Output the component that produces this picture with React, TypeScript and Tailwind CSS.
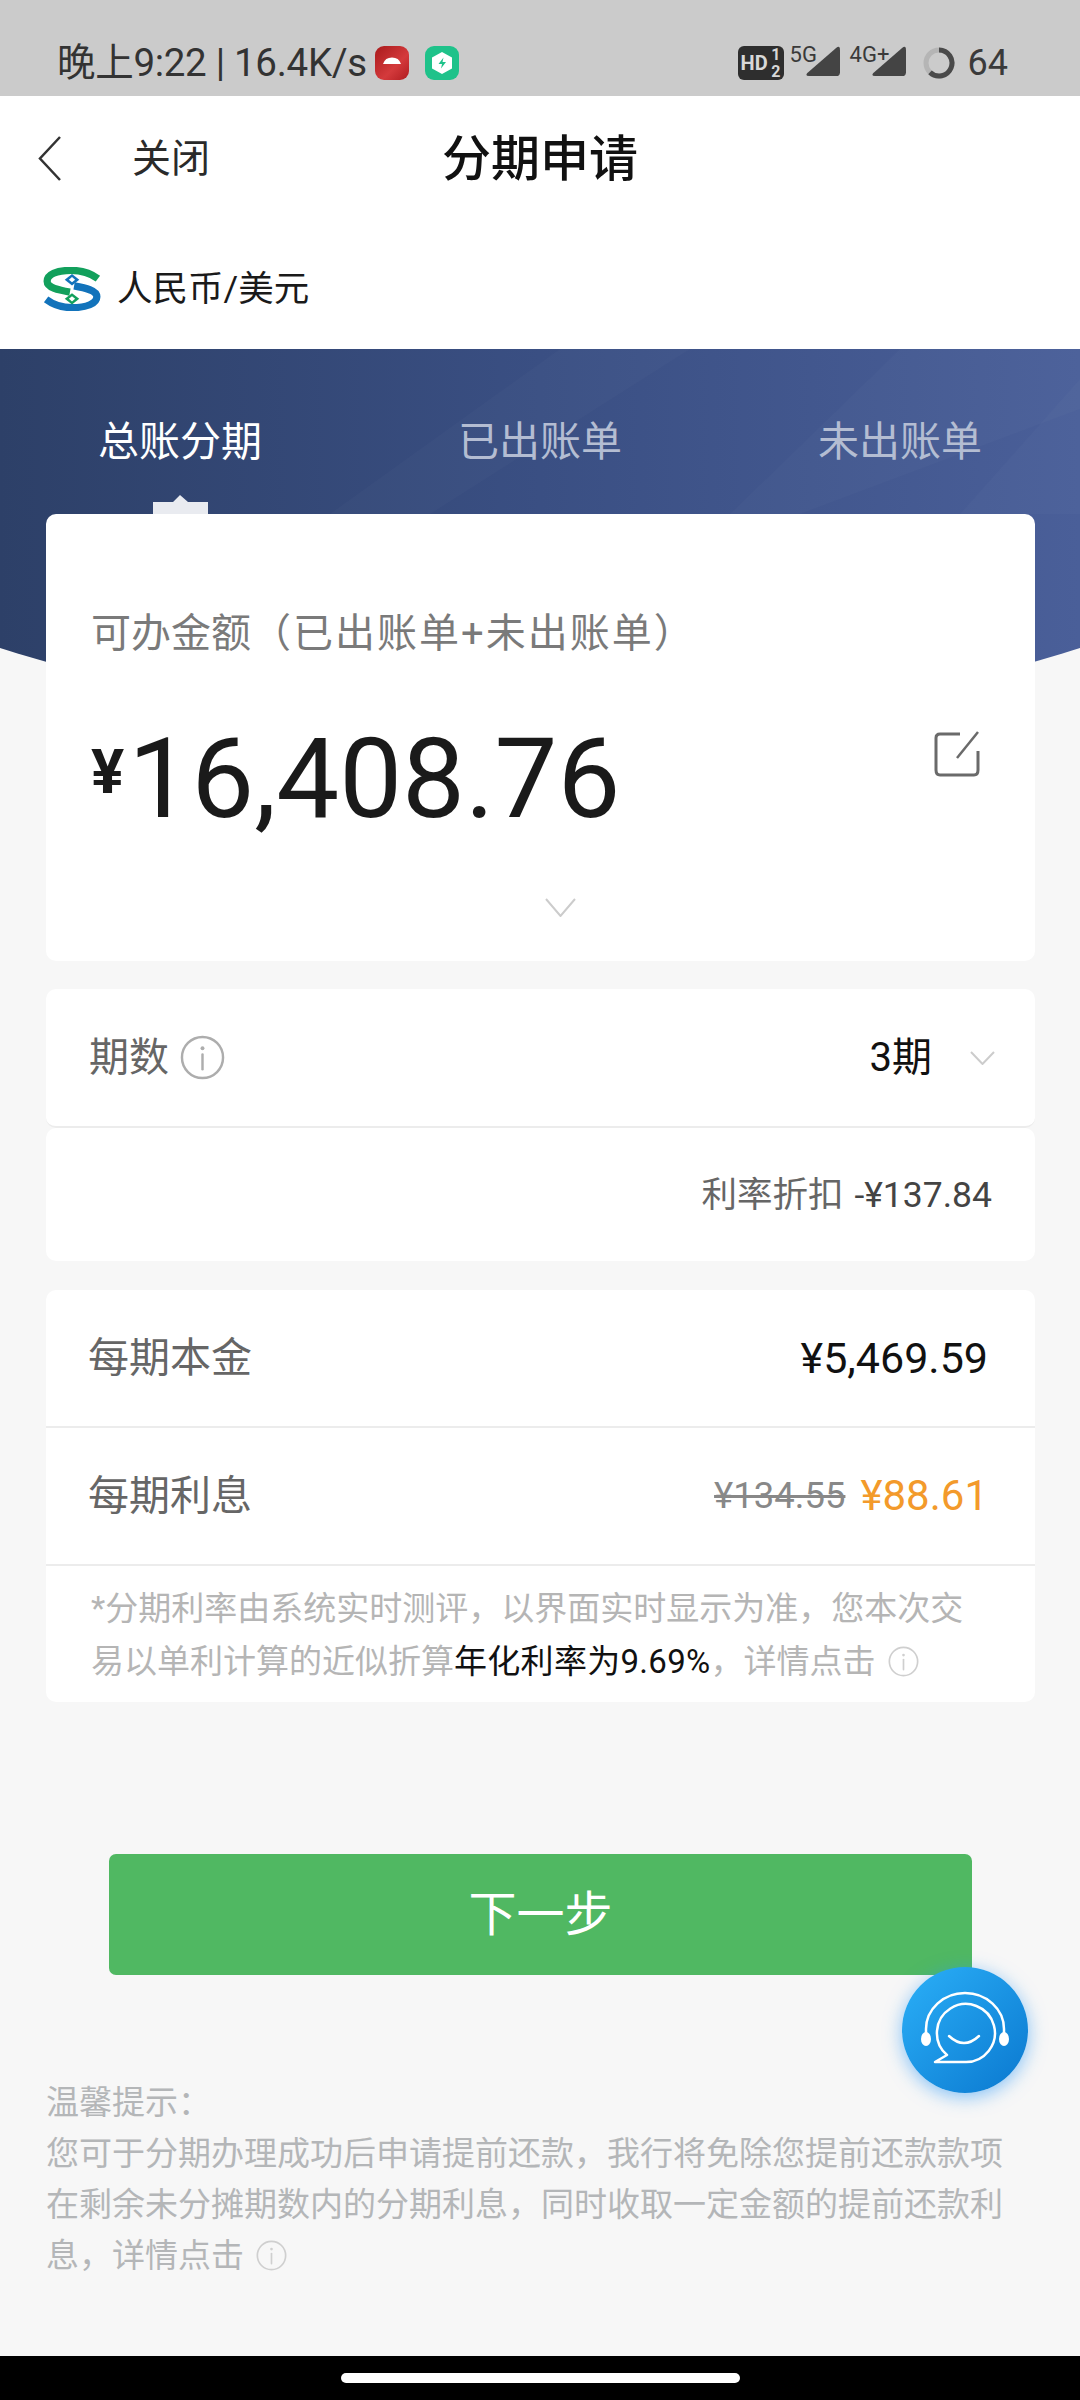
import React from 'react';

const SANS = 'font-[Roboto,"Noto_Sans_CJK_SC",sans-serif]';

function InfoIcon({ size, color }: { size: number; color: string }) {
  return (
    <svg width={size} height={size} viewBox="0 0 46 46" fill="none" className="inline-block shrink-0">
      <circle cx="23" cy="23" r="21" stroke={color} strokeWidth="2.5" />
      <circle cx="23" cy="13.5" r="2" fill={color} />
      <path d="M23 20v15" stroke={color} strokeWidth="2.5" strokeLinecap="round" />
    </svg>
  );
}

function Chevron({ w, h, color = '#cccccc' }: { w: number; h: number; color?: string }) {
  return (
    <svg width={w} height={h} viewBox={`0 0 ${w} ${h}`} fill="none" className="shrink-0">
      <path d={`M1 1L${w / 2} ${h - 1}L${w - 1} 1`} stroke={color} strokeWidth="2" />
    </svg>
  );
}

function Signal({ label, w }: { label: string; w: number }) {
  return (
    <div className="relative h-[34px]" style={{ width: w }}>
      <span className="absolute left-0 top-[-4px] text-[22px] leading-[26px] text-[#3a3a3a]">{label}</span>
      <svg width="35" height="31" viewBox="0 0 36 32" className="absolute right-0 top-0">
        <path d="M1 28L31 2Q35 -1 35 4V27Q35 31 31 31H3Q-1 31 1 28Z" fill="#444444" />
      </svg>
    </div>
  );
}

function StatusBar() {
  return (
    <div className="h-[96px] shrink-0 bg-[#cbcbcb] pl-[57px] pr-[72px] pt-[43px] flex justify-between items-start text-[#333333]">
      <div className="flex items-center h-[40px]">
        <span className="text-[38.5px] leading-[40px] tracking-[-0.3px] whitespace-nowrap">晚上9:22 | 16.4K/s</span>
        <svg width="34" height="34" viewBox="0 0 34 34" className="ml-[8px]">
          <defs>
            <linearGradient id="red" x1="0" y1="0" x2="1" y2="1">
              <stop offset="0" stopColor="#a91a1c" />
              <stop offset="0.6" stopColor="#d43a3c" />
              <stop offset="1" stopColor="#b01c20" />
            </linearGradient>
          </defs>
          <rect width="34" height="34" rx="9" fill="url(#red)" />
          <path d="M8 18a9.5 9.5 0 0 1 18 0Z" fill="#ffffff" />
        </svg>
        <svg width="34" height="34" viewBox="0 0 34 34" className="ml-[16px]">
          <rect width="34" height="34" rx="9" fill="#1fc28a" />
          <path d="M17 6l10 5.5v11L17 28 7 22.500v-11Z" fill="#ffffff" />
          <path d="M18.500 11.500L13.500 18h3.500l-1 4.500 5-6.500h-3.500Z" fill="#1fc28a" />
        </svg>
      </div>
      <div className="flex items-start">
        <div className="relative w-[46px] h-[34px] mt-[3px] rounded-[6px] bg-[#2e2e2e] text-[#d8d8d8] font-bold">
          <span className="absolute left-[3px] top-[7px] text-[20px] leading-[20px]">HD</span>
          <span className="absolute right-[3px] top-0 text-[16px] leading-[17px]">1</span>
          <span className="absolute right-[3px] bottom-0 text-[16px] leading-[17px]">2</span>
        </div>
        <div className="ml-[6px] mt-[3px]"><Signal label="5G" w={51} /></div>
        <div className="ml-[9px] mt-[3px]"><Signal label="4G+" w={57} /></div>
        <svg width="34" height="34" viewBox="0 0 34 34" fill="none" className="ml-[15px] mt-[3px]">
          <circle cx="17" cy="17" r="13" stroke="#b5b5b5" strokeWidth="5" />
          <path d="M17 4a13 13 0 1 1-9 22.400" stroke="#4a4a4a" strokeWidth="5" />
        </svg>
        <span className="ml-[12px] text-[36px] leading-[40px] text-[#3a3a3a]">64</span>
      </div>
    </div>
  );
}

function BankLogo() {
  return (
    <svg width="58" height="44" viewBox="0 0 56 42" fill="none" className="shrink-0">
      <path d="M53 11C45 5 36 3 27 3C13 3 4 7 4 13.500C4 20 15 22 26 24" stroke="#12a05c" strokeWidth="7" />
      <path d="M3 31C11 37 19 39 28 39C42 39 52 35 52 28.500C52 22 41 20 30 18" stroke="#1273bb" strokeWidth="7" />
      <path d="M28 6.500l7 5.500-7 5.500-7-5.500Z" fill="#1273bb" />
      <path d="M28 25l7 5.500-7 5.500-7-5.500Z" fill="#12a05c" />
      <path d="M28 9.500l3 2.500-3 2.500-3-2.500Z" fill="#ffffff" />
      <path d="M28 28l3 2.500-3 2.500-3-2.500Z" fill="#ffffff" />
    </svg>
  );
}

function SupportFab() {
  return (
    <div className="absolute left-[902px] top-[1967px] w-[126px] h-[126px] rounded-full bg-gradient-to-br from-[#2bb0f8] to-[#0a78cf] shadow-[0_4px_18px_rgba(40,150,245,0.55)]">
      <svg width="126" height="126" viewBox="0 0 126 126" fill="none">
        <path d="M24 66V62a39 36 0 0 1 78 0V66" stroke="#ffffff" strokeWidth="2.500" />
        <ellipse cx="24" cy="72" rx="5" ry="7" fill="#ffffff" />
        <ellipse cx="102" cy="72" rx="5" ry="7" fill="#ffffff" />
        <path d="M45 88A29 29 0 1 1 63 95H33L45 88Z" stroke="#ffffff" strokeWidth="2.500" strokeLinejoin="round" />
        <path d="M47 69Q62 83 77 69" stroke="#ffffff" strokeWidth="2.500" strokeLinecap="round" />
      </svg>
    </div>
  );
}

export default function App() {
  return (
    <div className={`relative w-[1080px] h-[2400px] flex flex-col overflow-hidden bg-[#f7f7f7] ${SANS}`}>
      <StatusBar />

      <div className="h-[124px] shrink-0 bg-white relative flex items-center">
        <svg width="24" height="45" viewBox="0 0 24 45" fill="none" className="ml-[38px]">
          <path d="M22 1L2 22.500L22 44" stroke="#333333" strokeWidth="2.500" />
        </svg>
        <span className="ml-[70px] mt-[2px] text-[39px] leading-[50px] text-[#2a2a2a]">关闭</span>
        <span className="absolute inset-x-0 top-[34px] text-center text-[49px] leading-[60px] font-medium text-[#111111]">分期申请</span>
      </div>

      <div className="h-[129px] shrink-0 bg-white pl-[43px] pt-[9px] flex items-center gap-[16px]">
        <BankLogo />
        <span className="text-[35.5px] leading-[48px] text-[#1a1a1a]">人民币/美元</span>
      </div>

      <div className="relative">
        {/* blue header behind the first card */}
        <div className="absolute left-0 top-0 w-full h-[382px] bg-gradient-to-r from-[#2d4068] via-[#3a4f83] to-[#4a5f99] [clip-path:circle(1800px_at_540px_-1418px)]">
          <svg width="1080" height="382" viewBox="0 0 1080 382" className="absolute inset-0">
            <path d="M560 0H690L430 165H330Z" fill="#ffffff" fillOpacity="0.02" />
            <path d="M900 0H1080V60L800 165H730Z" fill="#ffffff" fillOpacity="0.02" />
            <path d="M1080 30V165H960Z" fill="#ffffff" fillOpacity="0.02" />
          </svg>
        </div>

        <div className="relative grid grid-cols-3 h-[165px] pt-[63px] text-center text-[41px] leading-[60px]">
          <span className="text-white">总账分期</span>
          <span className="text-[#b4bdd2]">已出账单</span>
          <span className="text-[#b4bdd2]">未出账单</span>
          <div className="absolute left-[153px] bottom-0 w-[55px] h-[19px] bg-[#e9ebf0] [clip-path:polygon(0_7px,20px_7px,27px_0,35px_7px,100%_7px,100%_100%,0_100%)]" />
        </div>

        <div className="relative ml-[46px] mr-[45px] h-[447px] rounded-[10px] bg-white pl-[45px] pr-[46px] pt-[96px]">
          <div className="text-[40px] leading-[48px] text-[#7a7a7a] whitespace-nowrap">
            可办金额<span className="tracking-[2px]">（已出账单+未出账单）</span>
          </div>
          <div className="mt-[56px] h-[130px] flex items-center justify-between">
            <div className="flex items-center text-[#1a1a1a]">
              <span className="text-[62px] leading-[130px] font-bold mb-[14px]">¥</span>
              <span className="ml-[4px] text-[112px] leading-[130px]">16,408.76</span>
            </div>
            <svg width="46" height="46" viewBox="0 0 46 46" fill="none" className="mr-[9px] mb-[50px]">
              <path d="M26 3H6Q2 3 2 7V39Q2 44 6 44H40Q44 44 44 39V20" stroke="#6a6a6a" strokeWidth="3" />
              <path d="M44 1L23 27" stroke="#6a6a6a" strokeWidth="2.500" />
            </svg>
          </div>
          <div className="flex justify-center mt-[54px] ml-[40px]"><Chevron w={31} h={19} /></div>
        </div>
      </div>

      <div className="ml-[46px] mr-[45px] mt-[28px] rounded-[10px]">
        <div className="h-[139px] rounded-[10px] bg-white border-b-2 border-[#ececec] pl-[43px] pr-[40px] flex items-center justify-between">
          <div className="flex items-center gap-[11px] text-[40px] leading-[50px] text-[#666666]">
            期数
            <InfoIcon size={45} color="#adadad" />
          </div>
          <div className="flex items-center gap-[38px] text-[40px] leading-[50px] text-[#111111]">
            3期
            <Chevron w={25} h={14} />
          </div>
        </div>
        <div className="h-[133px] rounded-[10px] bg-white pr-[43px] flex items-center justify-end text-[35.5px] leading-[44px] text-[#666666]">
          利率折扣<span className="ml-[11px] text-[#444444]">-¥137.84</span>
        </div>
      </div>

      <div className="ml-[46px] mr-[45px] mt-[29px] rounded-[10px] bg-white">
        <div className="h-[138px] border-b-2 border-[#ececec] pl-[42px] pr-[47px] flex items-center justify-between">
          <span className="text-[41px] leading-[50px] text-[#666666]">每期本金</span>
          <span className="text-[43px] leading-[50px] text-[#111111]">¥5,469.59</span>
        </div>
        <div className="h-[138px] border-b-2 border-[#ececec] pl-[42px] pr-[47px] flex items-center justify-between">
          <span className="text-[41px] leading-[50px] text-[#666666]">每期利息</span>
          <div className="flex items-center gap-[15px]">
            <span className="text-[36.5px] leading-[50px] text-[#888888] line-through">¥134.55</span>
            <span className="text-[42px] leading-[50px] text-[#f39a2b]">¥88.61</span>
          </div>
        </div>
        <div className="h-[136px] pl-[45px] pt-[16px] text-[33px] leading-[53px] text-[#b5b5b5] whitespace-nowrap">
          <div>*分期利率由系统实时测评，以界面实时显示为准，您本次交</div>
          <div className="flex items-center">
            易以单利计算的近似折算<span className="text-[#111111] tracking-[0.3px]">年化利率为9.69%</span>，详情点击
            <span className="ml-[12px] flex"><InfoIcon size={31} color="#cfcfcf" /></span>
          </div>
        </div>
      </div>

      <button className="ml-[109px] mr-[108px] mt-[152px] h-[121px] shrink-0 rounded-[7px] bg-[#50b862] text-[48px] text-white">下一步</button>

      <div className="mx-[46px] mt-[102px] text-[33px] leading-[51px] text-[#b4b6b8] whitespace-nowrap">
        <div>温馨提示：</div>
        <div>您可于分期办理成功后申请提前还款，我行将免除您提前还款款项</div>
        <div>在剩余未分摊期数内的分期利息，同时收取一定金额的提前还款利</div>
        <div className="flex items-center">
          息，详情点击
          <span className="ml-[12px] flex"><InfoIcon size={31} color="#cfcfcf" /></span>
        </div>
      </div>

      <div className="mt-auto h-[44px] shrink-0 bg-black flex justify-center pt-[17px]">
        <div className="w-[399px] h-[10px] rounded-full bg-white" />
      </div>

      <SupportFab />
    </div>
  );
}
